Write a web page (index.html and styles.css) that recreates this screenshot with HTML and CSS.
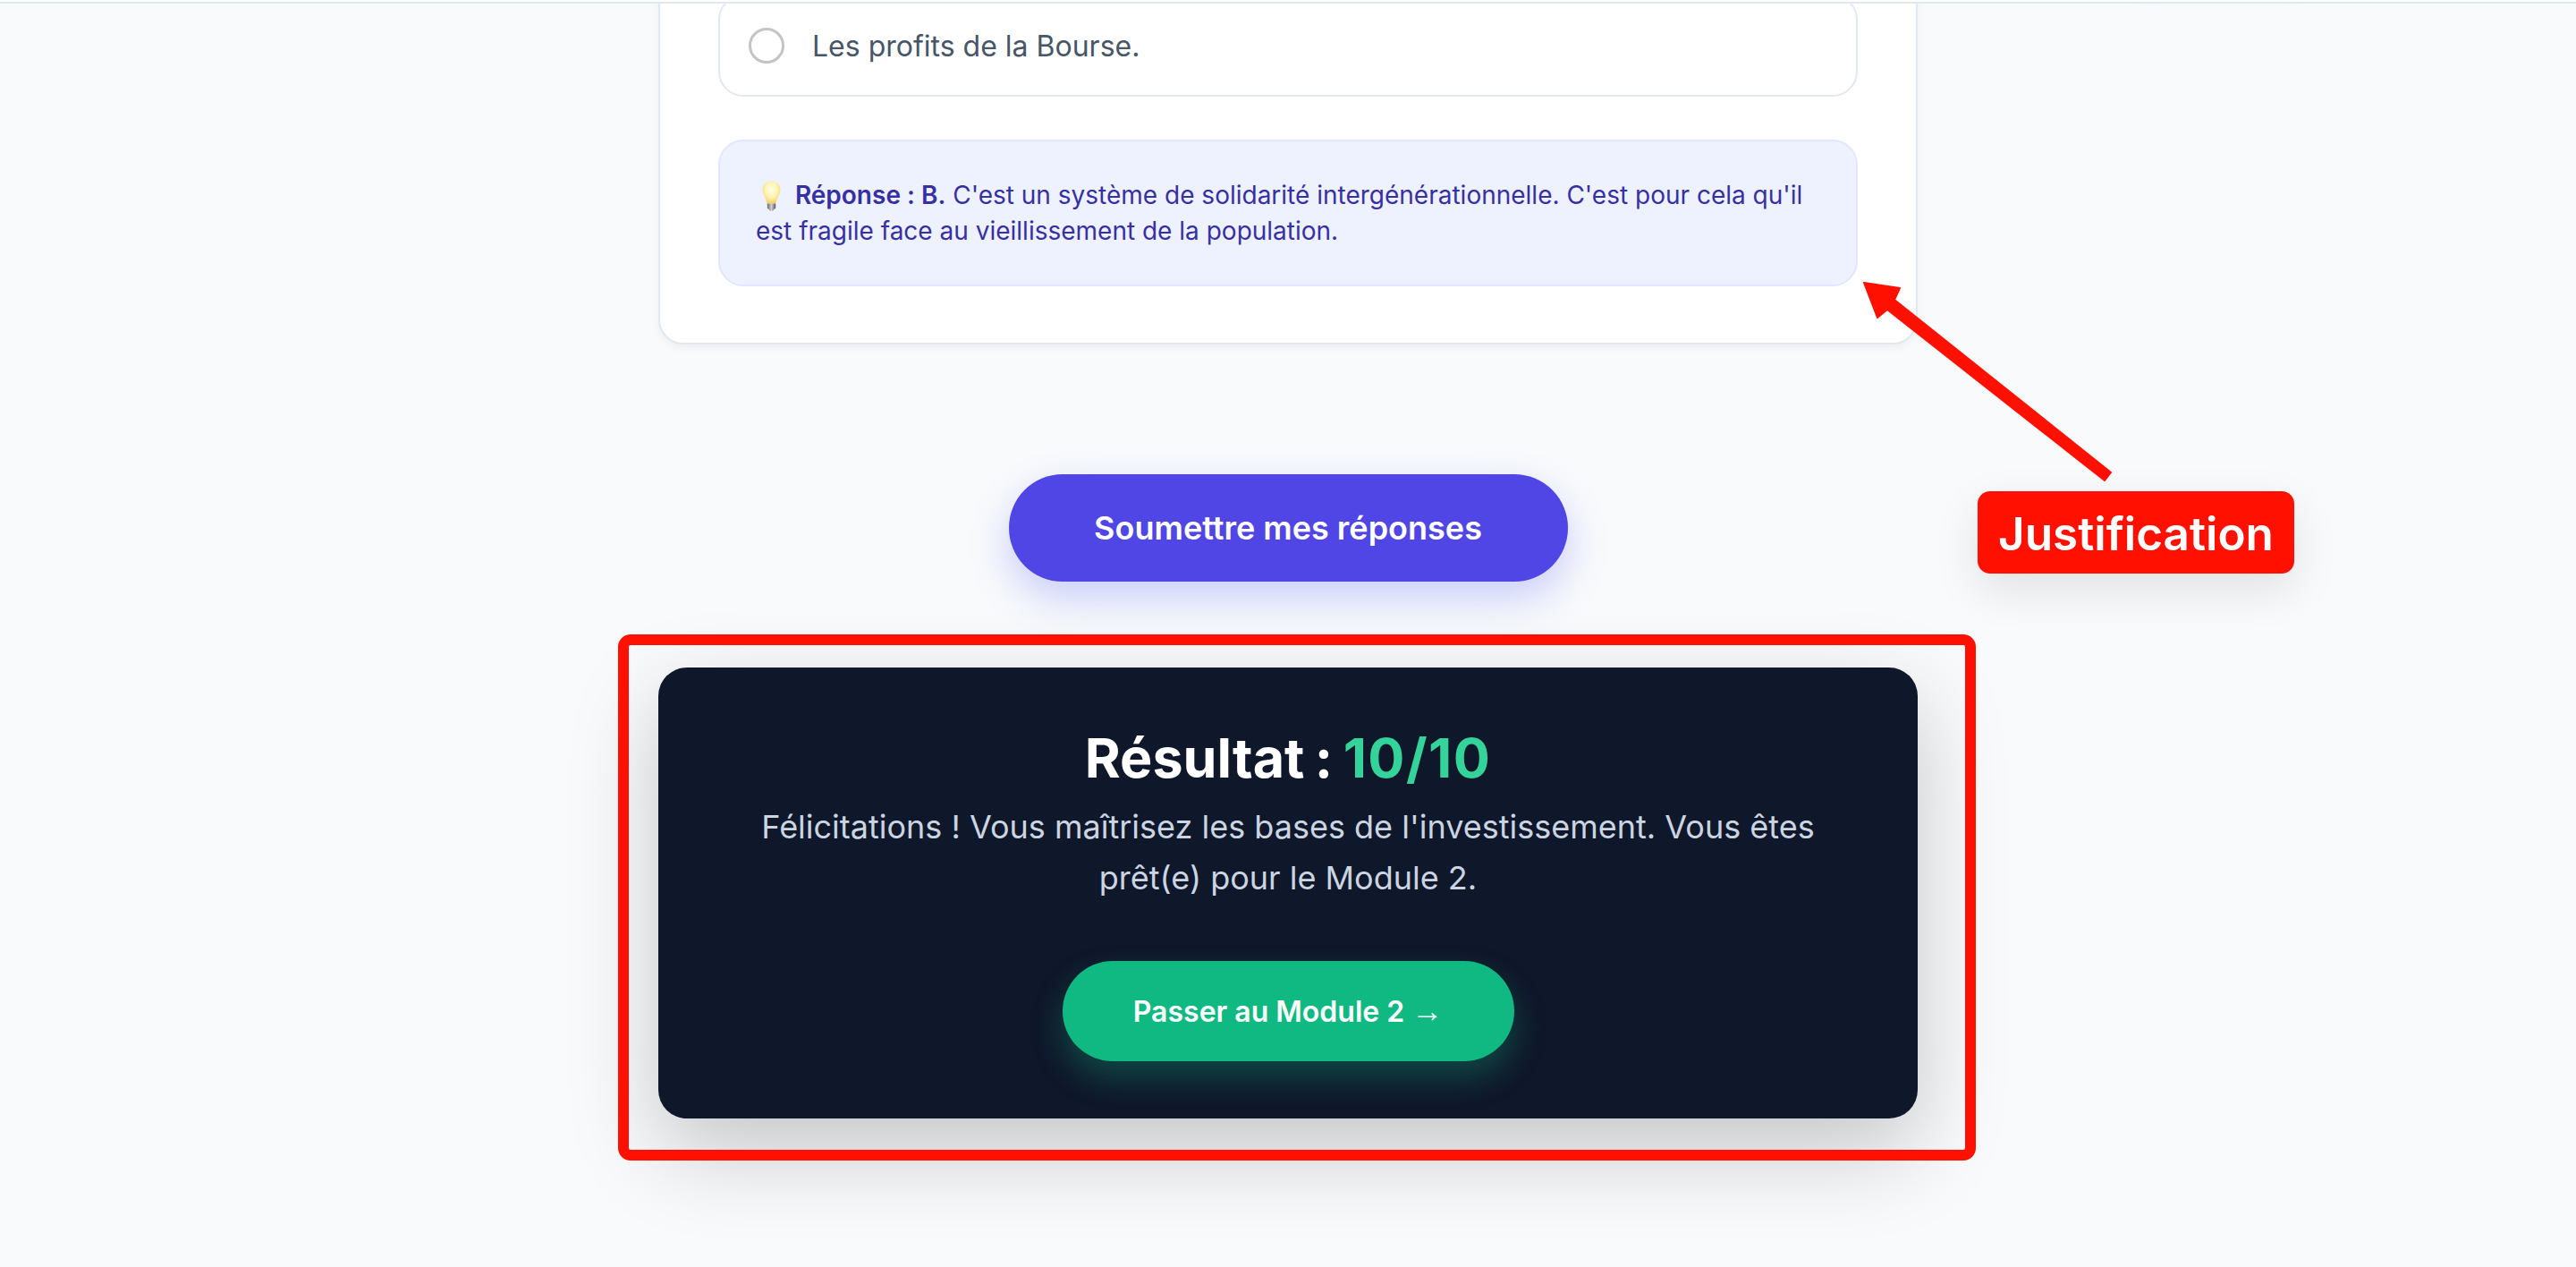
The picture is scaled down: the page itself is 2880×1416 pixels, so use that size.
FILE: index.html
```html
<!DOCTYPE html>
<html lang="fr">
<head>
<meta charset="utf-8">
<title>Module 1 – Quiz</title>
<link rel="stylesheet" href="styles.css">
</head>
<body>
<div class="topbar"></div>
<div class="offscreen-shadow" aria-hidden="true"></div>
<main class="page">
  <section class="quiz-card">
    <label class="option">
      <span class="radio"></span>
      <span class="option-text">Les profits de la Bourse.</span>
    </label>
    <div class="answer">
      <svg class="bulb" viewBox="0 0 21 34" aria-hidden="true">
        <defs>
          <radialGradient id="glass" cx="50%" cy="38%" r="60%">
            <stop offset="0" stop-color="#fffde8"/>
            <stop offset="0.6" stop-color="#fff3b0"/>
            <stop offset="1" stop-color="#f6cf62"/>
          </radialGradient>
          <linearGradient id="screw" x1="0" x2="1" y1="0" y2="0">
            <stop offset="0" stop-color="#6b6b6b"/>
            <stop offset="0.5" stop-color="#cfcfcf"/>
            <stop offset="1" stop-color="#5a5a5a"/>
          </linearGradient>
        </defs>
        <path d="M10.5 .5C4.8 .5.6 4.7.6 10.2c0 5.6 4.3 8.4 4.9 15.3h10c.6-6.9 4.9-9.7 4.9-15.3C20.4 4.7 16.2 .5 10.5 .5Z" fill="url(#glass)"/>
        <path d="M5.8 25.5h9.4v4.6c0 1-.8 1.6-1.8 1.8-.4 1.2-1.5 1.8-2.9 1.8s-2.5-.6-2.9-1.8c-1-.2-1.8-.8-1.8-1.8Z" fill="url(#screw)"/>
      </svg>
      <strong>Réponse : B.</strong> C'est un système de solidarité intergénérationnelle. C'est pour cela qu'il est fragile face au vieillissement de la population.
    </div>
  </section>

  <div class="submit-row">
    <button class="btn btn-submit" type="button">Soumettre mes réponses</button>
  </div>

  <section class="result">
    <h2 class="result-title">Résultat : <span class="score">10/10</span></h2>
    <p class="result-text">Félicitations ! Vous maîtrisez les bases de l'investissement. Vous êtes prêt(e) pour le Module 2.</p>
    <button class="btn btn-next" type="button">Passer au Module 2 <span class="next-arrow">→</span></button>
    <div class="frame"></div>
  </section>
</main>

<svg class="arrow" viewBox="0 0 300 240" aria-hidden="true">
  <path d="M2 2 42 8 36 21 278 214 271 223 28 32 17 41Z" fill="#ff1000" stroke="#ff1000" stroke-width="2" stroke-linejoin="round"/>
</svg>
<div class="tag">Justification</div>
</body>
</html>
```
FILE: styles.css
```css
* { box-sizing: border-box; }

html, body {
  margin: 0;
  height: 1416px;
  overflow: hidden;
}

body {
  position: relative;
  background: #f8fafc;
  font-family: Inter, "Liberation Sans", sans-serif;
  font-feature-settings: "calt" 0;
  color: #0f172a;
}

.topbar {
  position: absolute;
  top: 0;
  left: 0;
  right: 0;
  z-index: 5;
  height: 4px;
  background: #fff;
  border-bottom: 2px solid #e2e8f0;
}

.offscreen-shadow {
  position: absolute;
  left: 2374px;
  top: -145px;
  width: 213px;
  height: 92px;
  box-shadow: 0 18px 50px rgba(0, 0, 0, 0.1);
}

.page {
  width: 1408px;
  margin: 0 auto;
}

.quiz-card {
  margin-top: -42px;
  padding: 34px 65px 63px;
  background: #fff;
  border: 2px solid #e2e8f0;
  border-radius: 28px;
  box-shadow: 0 4px 10px rgba(15, 23, 42, 0.05);
}

.option {
  display: flex;
  align-items: center;
  gap: 31px;
  height: 114px;
  padding: 0 32px;
  border: 2px solid #e2e8f0;
  border-radius: 28px;
  background: #fff;
  color: #475569;
  font-size: 32px;
}

.radio {
  flex: none;
  width: 40px;
  height: 40px;
  border: 3.5px solid #c4c4c4;
  border-radius: 50%;
}

.answer {
  margin-top: 48px;
  padding: 40px 40px;
  min-height: 164px;
  background: #eef2ff;
  border: 2px solid #e0e7ff;
  border-radius: 28px;
  color: #3730a3;
  font-size: 28px;
  line-height: 40px;
}

.answer strong { font-weight: 600; }

.bulb {
  display: inline-block;
  width: 21px;
  height: 34px;
  margin: 0 8px 0 7px;
  vertical-align: -8px;
}

.submit-row {
  display: flex;
  justify-content: center;
  margin: 145px 0 96px;
}

.btn {
  border: 0;
  border-radius: 999px;
  color: #fff;
  font-family: inherit;
  font-weight: 600;
}

.btn-submit {
  width: 625px;
  height: 120px;
  background: #4f46e5;
  font-size: 36px;
  box-shadow: 0 18px 44px rgba(99, 102, 241, 0.3);
}

.result {
  position: relative;
  height: 504px;
  padding: 64px 88px 0;
  background: #0f172a;
  border-radius: 32px;
  text-align: center;
  box-shadow: 0 36px 100px rgba(0, 0, 0, 0.21);
}

.result-title {
  margin: 0 0 11px;
  color: #fff;
  font-size: 61px;
  font-weight: 700;
  line-height: 75px;
  word-spacing: -3px;
}

.score {
  color: #34d399;
  letter-spacing: 1.4px;
}

.result-text {
  margin: 0;
  color: #cbd5e1;
  font-size: 36px;
  line-height: 57px;
}

.btn-next {
  width: 505px;
  height: 112px;
  margin-top: 64px;
  background: #10b981;
  font-size: 32px;
  box-shadow: 0 18px 36px rgba(16, 185, 129, 0.3);
}

.next-arrow {
  font-family: "Liberation Sans", sans-serif;
  font-size: 35px;
  font-weight: 700;
  line-height: 0;
}

.frame {
  position: absolute;
  top: -37px;
  left: -45px;
  right: -65px;
  bottom: -47px;
  border: 12px solid #ff1000;
  border-radius: 14px;
}

.arrow {
  position: absolute;
  left: 2082px;
  top: 314px;
  width: 300px;
  height: 240px;
}

.tag {
  position: absolute;
  left: 2211px;
  top: 549px;
  display: flex;
  align-items: center;
  justify-content: center;
  width: 354px;
  height: 92px;
  padding-top: 2px;
  background: #ff1000;
  border-radius: 14px;
  color: #fff;
  font-size: 51.2px;
  font-weight: 600;
  box-shadow: 0 18px 50px rgba(0, 0, 0, 0.1);
}
```
